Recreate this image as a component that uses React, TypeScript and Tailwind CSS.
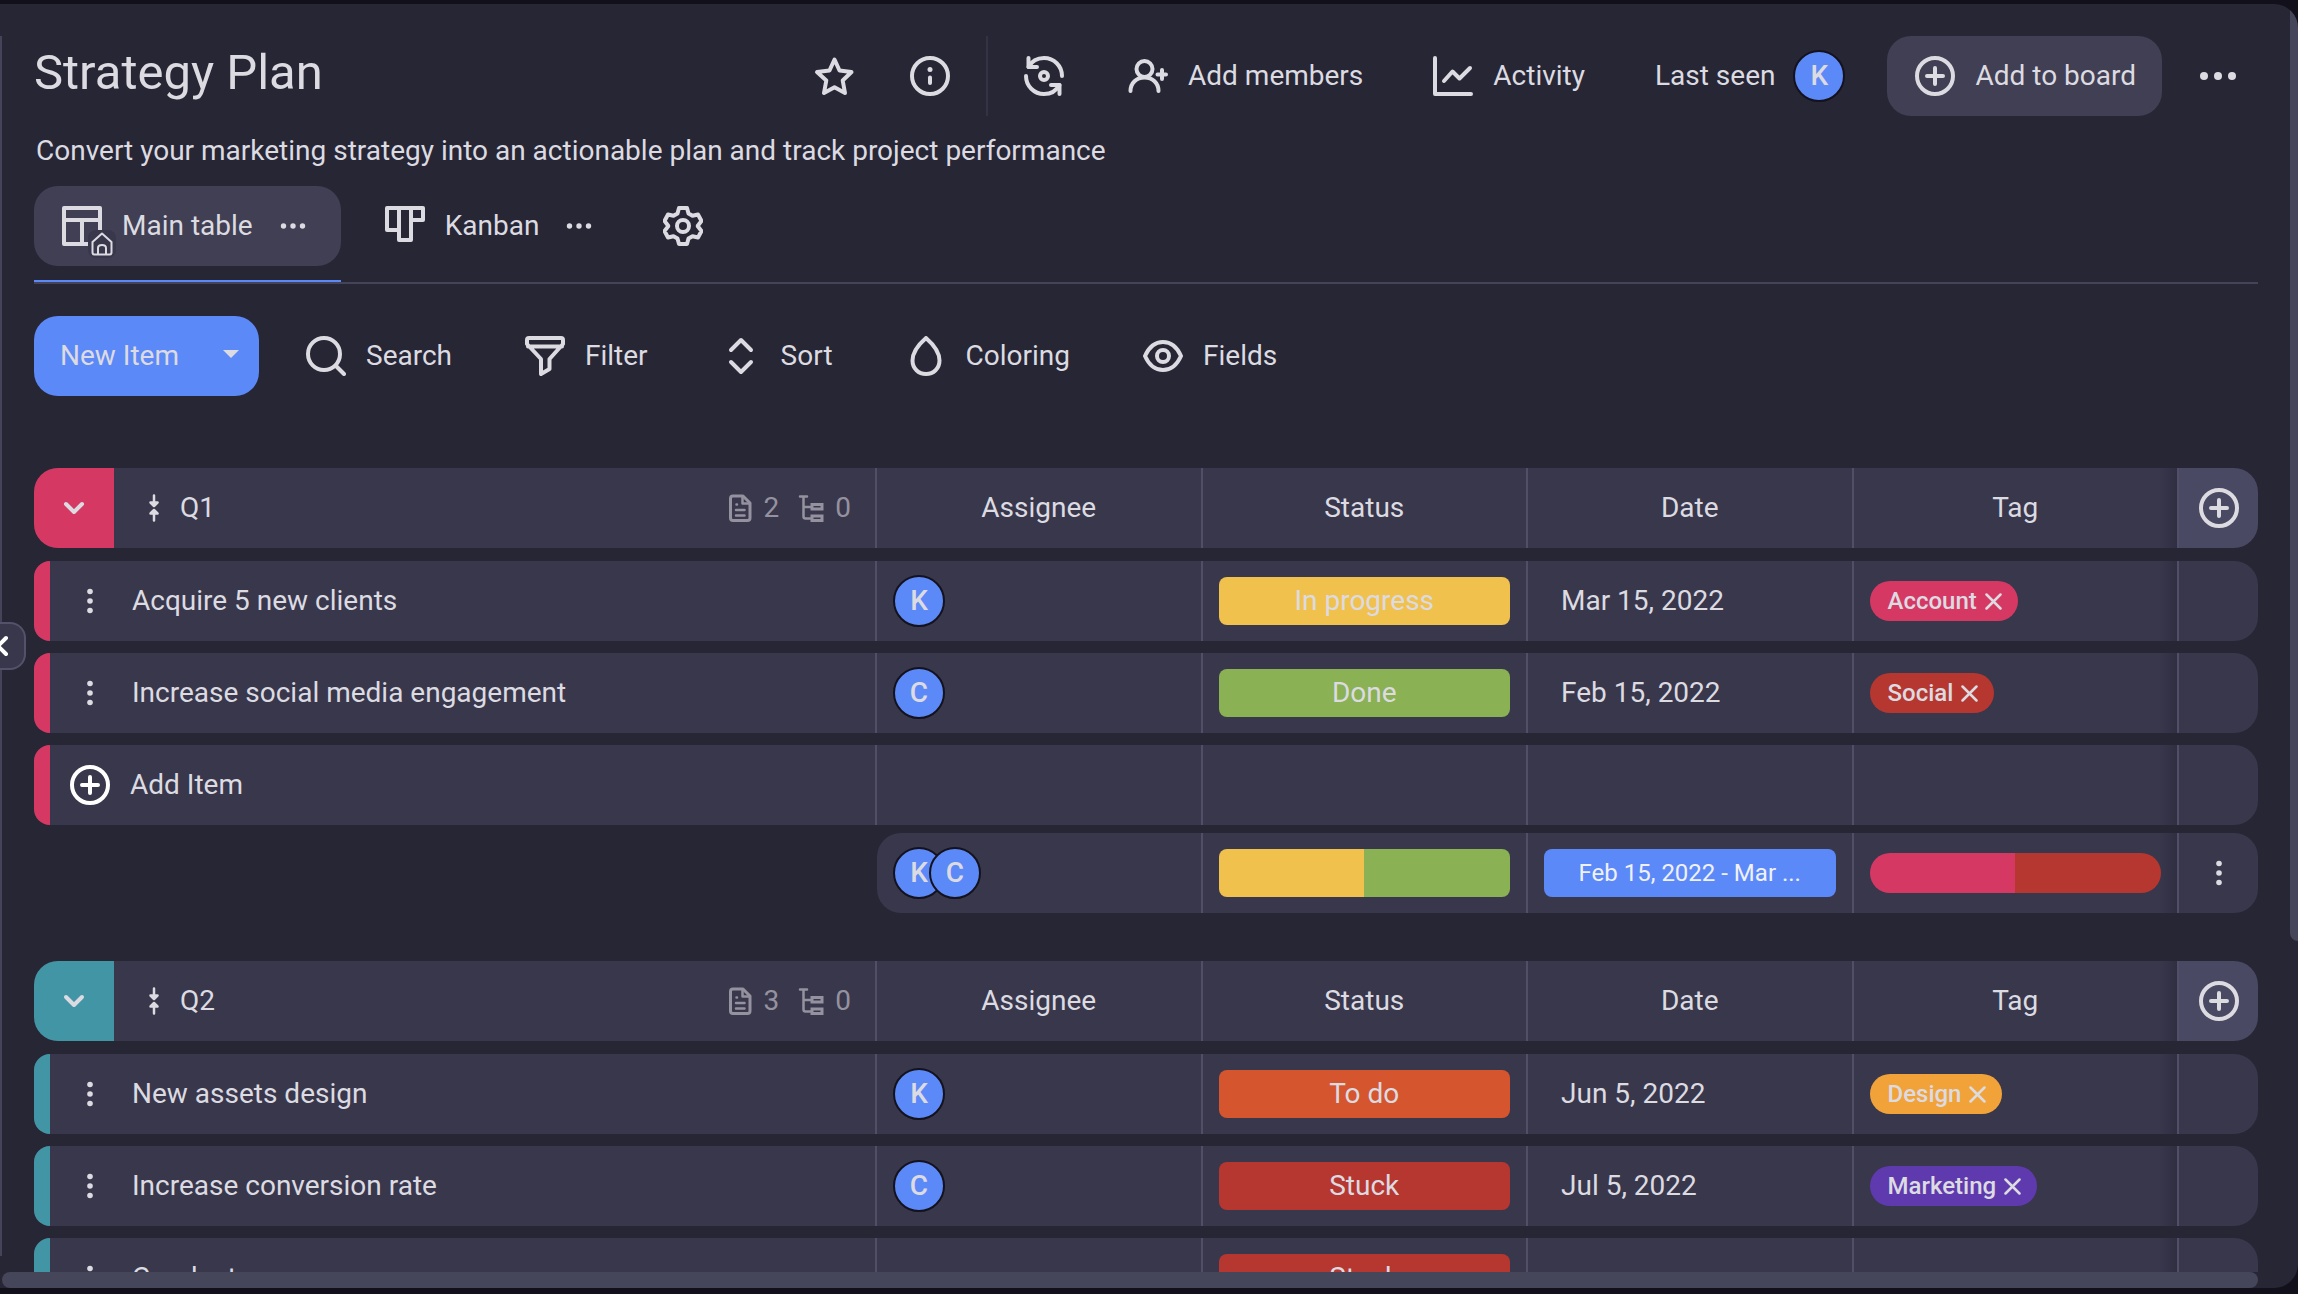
import type { ReactNode } from "react";

type Item = {
  name: string;
  assignee?: string;
  status?: { label: string; className: string };
  date?: string;
  tag?: { label: string; className: string };
};

type Group = {
  title: string;
  className: string;
  itemCount: number;
  subItemCount: number;
  items: Item[];
};

const columns = ["Assignee", "Status", "Date", "Tag"];

const groups: Group[] = [
  {
    title: "Q1",
    className: "bg-[#d63864]",
    itemCount: 2,
    subItemCount: 0,
    items: [
      {
        name: "Acquire 5 new clients",
        assignee: "K",
        status: { label: "In progress", className: "bg-[#f1c14e]" },
        date: "Mar 15, 2022",
        tag: { label: "Account", className: "bg-[#d63864]" },
      },
      {
        name: "Increase social media engagement",
        assignee: "C",
        status: { label: "Done", className: "bg-[#8ab153]" },
        date: "Feb 15, 2022",
        tag: { label: "Social", className: "bg-[#b63730]" },
      },
    ],
  },
  {
    title: "Q2",
    className: "bg-[#4295a5]",
    itemCount: 3,
    subItemCount: 0,
    items: [
      {
        name: "New assets design",
        assignee: "K",
        status: { label: "To do", className: "bg-[#d5552e]" },
        date: "Jun 5, 2022",
        tag: { label: "Design", className: "bg-[#f1a33a]" },
      },
      {
        name: "Increase conversion rate",
        assignee: "C",
        status: { label: "Stuck", className: "bg-[#b63730]" },
        date: "Jul 5, 2022",
        tag: { label: "Marketing", className: "bg-[#5f3aae]" },
      },
      {
        name: "Conduct",
        status: { label: "Stuck", className: "bg-[#b63730]" },
      },
    ],
  },
];

const rowGrid = "grid h-20 grid-cols-[843px_repeat(4,minmax(0,1fr))_79px]";
const cell = "flex items-center border-r-2 border-[#514f67] bg-[#39374c]";
const shadowCell =
  "bg-[linear-gradient(to_left,#302e41,#39374c_18px)] flex items-center border-r-2 border-[#514f67]";

function Icon({
  children,
  size = "size-10",
  box = 40,
  width = 4,
}: {
  children: ReactNode;
  size?: string;
  box?: number;
  width?: number;
}) {
  return (
    <svg
      viewBox={`0 0 ${box} ${box}`}
      className={`${size} shrink-0`}
      fill="none"
      stroke="currentColor"
      strokeWidth={width}
      strokeLinecap="round"
      strokeLinejoin="round"
      aria-hidden="true"
    >
      {children}
    </svg>
  );
}

function StarIcon() {
  return (
    <Icon>
      <path d="M20.5 3.5L25.5 14.5L37.5 16L28.7 24.5L31 37L20.5 31.2L10 37L12.3 24.5L3 16L15.500 14.500Z" />
    </Icon>
  );
}

function InfoIcon() {
  return (
    <Icon>
      <circle cx="20" cy="20" r="18" />
      <path d="M20 21.500V27" />
      <circle cx="20" cy="13.500" r="2.500" fill="currentColor" stroke="none" />
    </Icon>
  );
}

function SyncIcon() {
  return (
    <Icon>
      <path d="M38 20C38 10 30 2 20 2C13 2 7.500 5.500 4.500 11" />
      <path d="M4.500 2V11H13" />
      <path d="M2 20C2 30 10 38 20 38C27 38 32.500 34.500 35.500 29" />
      <path d="M35.500 38V29H27" />
      <circle cx="20" cy="20" r="4" />
    </Icon>
  );
}

function AddUserIcon() {
  return (
    <Icon>
      <circle cx="16.500" cy="13" r="8" />
      <path d="M2.500 35C2.500 27 8.500 21.500 16.500 21.500S30.500 27 30.500 35" />
      <path d="M34 14V23M29.500 18.500H38" />
    </Icon>
  );
}

function ActivityIcon() {
  return (
    <Icon>
      <path d="M2 2V38H38" />
      <path d="M11 25L19.500 15.500L26.500 22.500L37 12" />
    </Icon>
  );
}

function PlusCircleIcon() {
  return (
    <Icon>
      <circle cx="20" cy="20" r="18" />
      <path d="M20 12V28M12 20H28" />
    </Icon>
  );
}

function MoreIcon({ radius = 4, step = 14 }: { radius?: number; step?: number }) {
  return (
    <svg viewBox="0 0 40 40" className="size-10 shrink-0" fill="currentColor" aria-hidden="true">
      <circle cx={20 - step} cy="20" r={radius} />
      <circle cx="20" cy="20" r={radius} />
      <circle cx={20 + step} cy="20" r={radius} />
    </svg>
  );
}

function DragIcon() {
  return (
    <svg viewBox="0 0 40 40" className="size-10 shrink-0" fill="currentColor" aria-hidden="true">
      <circle cx="20" cy="10.500" r="2.800" />
      <circle cx="20" cy="20" r="2.800" />
      <circle cx="20" cy="29.500" r="2.800" />
    </svg>
  );
}

function TableIcon() {
  return (
    <span className="relative">
      <Icon>
        <path d="M2 2H38V38H2ZM2 14H38M20 14V38" strokeLinecap="butt" />
      </Icon>
      <span className="absolute -right-3.5 -bottom-3 rounded-lg bg-[#39374c] p-0.5">
        <Icon size="size-6" box={24} width={2}>
          <path d="M2.500 10L12 1.500L21.500 10V20.500Q21.500 22.500 19.500 22.500H4.500Q2.500 22.500 2.500 20.500Z" />
          <path d="M8 22V16Q8 13 12 13T16 16V22" />
        </Icon>
      </span>
    </span>
  );
}

function KanbanIcon() {
  return (
    <Icon>
      <path d="M2 2H38V14H26V34H14V24H2ZM14 2V24M26 2V14" />
    </Icon>
  );
}

function GearIcon() {
  return (
    <Icon>
      <path d="M16 2H24L25.500 7.500L29.500 9.800L35 8.500L38.500 15L34.800 19.800V20.200L38.500 25L35 31.500L29.500 30.200L25.500 32.500L24 38H16L14.500 32.500L10.500 30.200L5 31.500L1.500 25L5.200 20.200V19.800L1.500 15L5 8.500L10.500 9.800L14.500 7.500Z" />
      <circle cx="20" cy="20" r="6" />
    </Icon>
  );
}

function SearchIcon() {
  return (
    <Icon>
      <circle cx="18" cy="18" r="16" />
      <path d="M30 30L38 38" />
    </Icon>
  );
}

function FilterIcon() {
  return (
    <Icon>
      <path d="M4 2H36Q38 2 38 4V8L24.500 23V33L16 38V23L2 8V4Q2 2 4 2ZM3 10.500H37" />
    </Icon>
  );
}

function SortIcon() {
  return (
    <Icon>
      <path d="M10 14L20 4L30 14M10 26L20 36L30 26" />
    </Icon>
  );
}

function DropIcon() {
  return (
    <Icon>
      <path d="M20 2C12 9 6.500 17 6.500 24.500C6.500 32.500 12.500 38 20 38S33.500 32.500 33.500 24.500C33.500 17 28 9 20 2Z" />
    </Icon>
  );
}

function EyeIcon() {
  return (
    <Icon>
      <path d="M2 20C6 11 12.500 6 20 6S34 11 38 20C34 29 27.500 34 20 34S6 29 2 20Z" />
      <circle cx="20" cy="20" r="6" />
    </Icon>
  );
}

function CollapseIcon() {
  return (
    <Icon size="size-7" box={28} width={2.5}>
      <path d="M14 1.500V9M14 26.500V19" />
      <path d="M10.500 8.500L14 12L17.500 8.500ZM10.500 19.500L14 16L17.500 19.500Z" fill="currentColor" />
    </Icon>
  );
}

function DocIcon() {
  return (
    <Icon size="size-8" box={32} width={3}>
      <path d="M19 4H9Q6.500 4 6.500 6.500V26Q6.500 28.500 9 28.500H23.500Q26 28.500 26 26V11Z" />
      <path d="M18.500 4.500V11.500H25.500M12 18H20.500M12 23.500H20.500M12.500 12.500H13" strokeWidth="2.500" />
    </Icon>
  );
}

function TreeIcon() {
  return (
    <Icon size="size-8" box={32} width={3}>
      <path d="M5 4.500H12M8.500 5V24.500Q8.500 26.500 10.500 26.500H16M8.500 15H16" strokeWidth="2.500" />
      <path d="M17 12.500H27V17H17ZM17 24H27V28.500H17Z" strokeLinejoin="miter" />
    </Icon>
  );
}

function Avatar({ letter, className = "" }: { letter: string; className?: string }) {
  return (
    <span
      className={`flex size-13 shrink-0 items-center justify-center rounded-full border-2 border-[#14121c] bg-[#5c89f8] font-medium ${className}`}
    >
      {letter}
    </span>
  );
}

function IconButton({ label, children }: { label: string; children: ReactNode }) {
  return (
    <button aria-label={label} className="flex size-20 items-center justify-center rounded-3xl">
      {children}
    </button>
  );
}

function TextButton({
  icon,
  children,
  className = "",
}: {
  icon: ReactNode;
  children: ReactNode;
  className?: string;
}) {
  return (
    <button
      className={`flex h-20 items-center gap-5 rounded-3xl pr-[26px] pl-7 whitespace-nowrap ${className}`}
    >
      {icon}
      {children}
    </button>
  );
}

function Header() {
  return (
    <header>
      <div className="flex h-20 items-center gap-4">
        <h1 className="flex-1 self-start text-[49px] leading-[74px] whitespace-nowrap">
          Strategy Plan
        </h1>
        <IconButton label="Add to favorites">
          <StarIcon />
        </IconButton>
        <IconButton label="Board info">
          <InfoIcon />
        </IconButton>
        <div className="h-20 w-0.5 bg-[#343244]" />
        <IconButton label="Automations">
          <SyncIcon />
        </IconButton>
        <TextButton icon={<AddUserIcon />}>Add members</TextButton>
        <TextButton icon={<ActivityIcon />}>Activity</TextButton>
        <div className="flex items-center gap-[18px] pr-[26px] pl-7 whitespace-nowrap">
          Last seen
          <Avatar letter="K" />
        </div>
        <TextButton icon={<PlusCircleIcon />} className="bg-[#413f53]">
          Add to board
        </TextButton>
        <IconButton label="More">
          <MoreIcon />
        </IconButton>
      </div>
      <p className="mt-[17px] pl-0.5 leading-9">
        Convert your marketing strategy into an actionable plan and track project performance
      </p>
    </header>
  );
}

function Tab({ icon, label, active }: { icon: ReactNode; label: string; active?: boolean }) {
  return (
    <div className={`border-b-2 pb-3.5 ${active ? "border-[#5c89f8]" : "border-transparent"}`}>
      <div
        className={`flex h-20 items-center gap-5 rounded-3xl px-7 ${active ? "bg-[#413f53]" : ""}`}
      >
        <a href="#" className="flex items-center gap-5" aria-current={active ? "page" : undefined}>
          {icon}
          {label}
        </a>
        <button aria-label={`${label} options`}>
          <MoreIcon radius={2.7} step={9.5} />
        </button>
      </div>
    </div>
  );
}

function Toolbar() {
  return (
    <div className="mt-8 flex items-center gap-[19px]">
      <div className="flex h-20 overflow-hidden rounded-3xl bg-[#5c89f8]">
        <button className="pr-6 pl-[26px] whitespace-nowrap">New Item</button>
        <button aria-label="More item types" className="flex w-14 items-center justify-center">
          <svg viewBox="0 0 16 12" className="h-3 w-4" fill="currentColor" aria-hidden="true">
            <path d="M0 0H16L8 8Z" />
          </svg>
        </button>
      </div>
      <TextButton icon={<SearchIcon />}>Search</TextButton>
      <TextButton icon={<FilterIcon />}>Filter</TextButton>
      <TextButton icon={<SortIcon />}>Sort</TextButton>
      <TextButton icon={<DropIcon />}>Coloring</TextButton>
      <TextButton icon={<EyeIcon />}>Fields</TextButton>
    </div>
  );
}

function GroupHeader({ group }: { group: Group }) {
  return (
    <thead className="block">
      <tr className={rowGrid}>
        <th scope="col" className={`${cell} rounded-l-3xl font-normal`}>
          <button
            aria-label={`Collapse ${group.title}`}
            className={`flex size-20 items-center justify-center rounded-l-3xl ${group.className}`}
          >
            <Icon>
              <path d="M12 16L20 24L28 16" />
            </Icon>
          </button>
          <span className="flex flex-1 items-center gap-3 pl-[26px]">
            <CollapseIcon />
            {group.title}
          </span>
          <span className="flex items-center gap-2 pr-6 text-[#94929f]">
            <DocIcon />
            {group.itemCount}
            <span className="w-0" />
            <TreeIcon />
            {group.subItemCount}
          </span>
        </th>
        {columns.map((column) => (
          <th
            key={column}
            scope="col"
            className={`${column === "Tag" ? shadowCell : cell} justify-center font-normal`}
          >
            {column}
          </th>
        ))}
        <th className="flex items-center justify-center rounded-r-3xl bg-[#4a4963]">
          <button aria-label="Add field">
            <PlusCircleIcon />
          </button>
        </th>
      </tr>
    </thead>
  );
}

function ItemRow({ item, color }: { item: Item; color: string }) {
  return (
    <tr className={rowGrid}>
      <td className={`${cell} gap-5 rounded-l-2xl`}>
        <span className={`h-20 w-4 rounded-l-2xl ${color}`} />
        <button aria-label="Item menu">
          <DragIcon />
        </button>
        <span className="pl-0.5">{item.name}</span>
      </td>
      <td className={`${cell} px-4`}>{item.assignee && <Avatar letter={item.assignee} />}</td>
      <td className={`${cell} px-4`}>
        {item.status && (
          <button className={`h-12 w-full rounded-lg ${item.status.className}`}>
            {item.status.label}
          </button>
        )}
      </td>
      <td className={`${cell} pl-[33px]`}>{item.date}</td>
      <td className={`${shadowCell} px-4`}>
        {item.tag && (
          <span
            className={`flex h-10 items-center gap-2 rounded-full pr-4 pl-[18px] text-2xl font-medium ${item.tag.className}`}
          >
            {item.tag.label}
            <button aria-label={`Remove ${item.tag.label}`}>
              <Icon size="size-[17px]" box={17} width={2.5}>
                <path d="M1.500 1.500L15.500 15.500M15.500 1.500L1.500 15.500" />
              </Icon>
            </button>
          </span>
        )}
      </td>
      <td className="rounded-r-3xl bg-[#39374c]" />
    </tr>
  );
}

function AddItemRow({ color }: { color: string }) {
  return (
    <tr className={rowGrid}>
      <td className={`${cell} gap-5 rounded-l-2xl`}>
        <span className={`h-20 w-4 rounded-l-2xl ${color}`} />
        <button className="flex items-center gap-5">
          <span className="text-white">
            <PlusCircleIcon />
          </span>
          Add Item
        </button>
      </td>
      <td className={cell} />
      <td className={cell} />
      <td className={cell} />
      <td className={shadowCell} />
      <td className="rounded-r-3xl bg-[#39374c]" />
    </tr>
  );
}

function SummaryRow() {
  return (
    <tfoot className="mt-2 block">
      <tr className={rowGrid}>
        <td />
        <td className={`${cell} rounded-l-3xl px-4`}>
          <Avatar letter="K" />
          <Avatar letter="C" className="-ml-4" />
        </td>
        <td className={`${cell} px-4`}>
          <div className="flex h-12 w-full overflow-hidden rounded-lg">
            <span className="flex-1 bg-[#f1c14e]" />
            <span className="flex-1 bg-[#8ab153]" />
          </div>
        </td>
        <td className={`${cell} px-4`}>
          <button className="h-12 w-full truncate rounded-lg bg-[#5c89f8] px-7 text-2xl text-[#f0f1f8]">
            Feb 15, 2022 - Mar ...
          </button>
        </td>
        <td className={`${shadowCell} px-4`}>
          <div className="flex h-10 w-full overflow-hidden rounded-full">
            <span className="flex-1 bg-[#d63864]" />
            <span className="flex-1 bg-[#b63730]" />
          </div>
        </td>
        <td className="flex items-center justify-center rounded-r-3xl bg-[#39374c]">
          <button aria-label="Summary menu">
            <DragIcon />
          </button>
        </td>
      </tr>
    </tfoot>
  );
}

export default function App() {
  return (
    <div className="h-screen bg-[#12101a] pt-1 pb-1.5 font-[Roboto,sans-serif] text-[28px] text-[#dcdbe1]">
      <main className="relative flex h-full flex-col overflow-hidden rounded-r-3xl bg-[#272635]">
        <div className="absolute top-8 bottom-8 left-0 w-0.5 bg-[#444357]" />
        <button
          aria-label="Toggle sidebar"
          className="absolute top-1/2 left-0 flex h-12 w-[26px] -translate-y-1/2 items-center rounded-r-2xl border-2 border-l-0 border-[#54526a] bg-[#39374c] text-white"
        >
          <svg
            viewBox="0 0 10 24"
            className="h-6 w-2.5"
            fill="none"
            stroke="currentColor"
            strokeWidth="4"
            strokeLinecap="round"
            aria-hidden="true"
          >
            <path d="M6 4L-2 12L6 20" />
          </svg>
        </button>

        <div className="min-h-0 flex-1 overflow-hidden pt-8 pr-10 pl-[34px]">
          <Header />
          <nav className="mt-[17px] flex gap-4 border-b-2 border-[#444357]">
            <Tab icon={<TableIcon />} label="Main table" active />
            <Tab icon={<KanbanIcon />} label="Kanban" />
            <IconButton label="View settings">
              <GearIcon />
            </IconButton>
          </nav>
          <Toolbar />
          <div className="mt-[72px] flex flex-col gap-12">
            {groups.map((group, index) => (
              <table key={group.title} className="block">
                <GroupHeader group={group} />
                <tbody className="mt-[13px] flex flex-col gap-3">
                  {group.items.map((item) => (
                    <ItemRow key={item.name} item={item} color={group.className} />
                  ))}
                  <AddItemRow color={group.className} />
                </tbody>
                {index === 0 && <SummaryRow />}
              </table>
            ))}
          </div>
        </div>

        {/* scrollbars */}
        <div className="mr-10 ml-0.5 h-4 rounded-lg bg-[#45465a]" />
        <div className="absolute top-0 right-0 h-[73%] w-2 rounded-bl-lg bg-[#45465a]" />
      </main>
    </div>
  );
}
